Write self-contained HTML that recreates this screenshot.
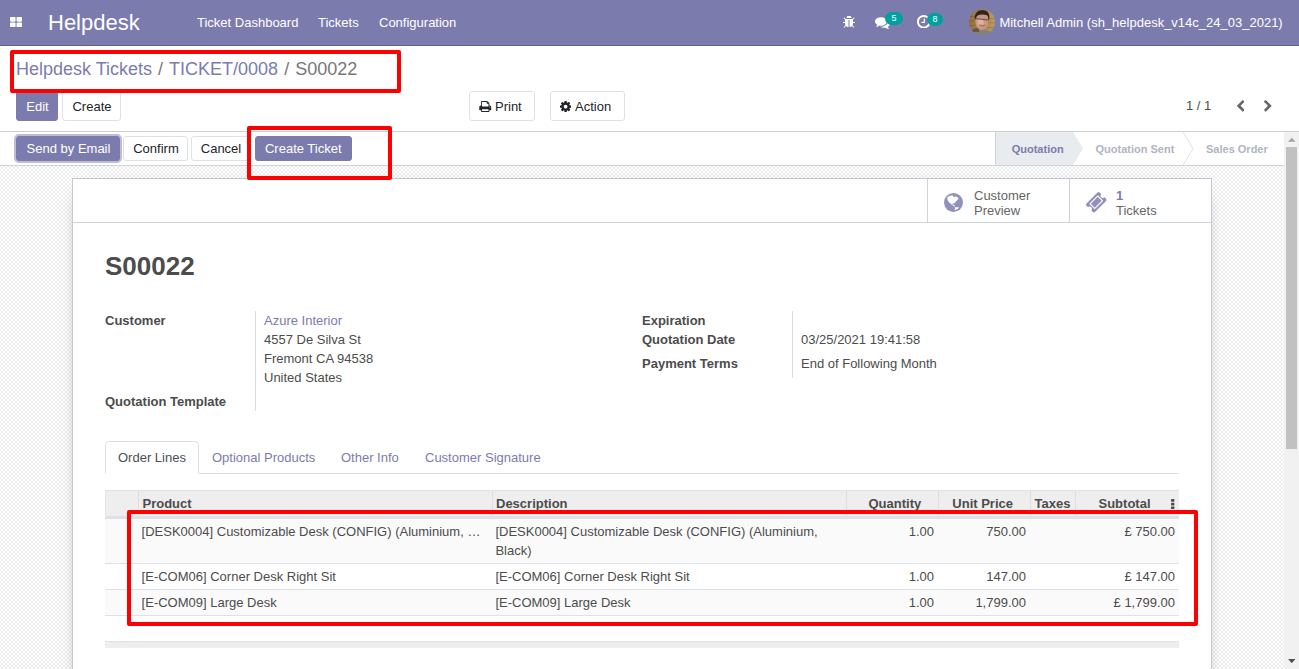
<!DOCTYPE html>
<html lang="en">
<head>
<meta charset="utf-8">
<title>S00022 - Odoo</title>
<style>
*{box-sizing:border-box;margin:0;padding:0}
html,body{width:1299px;height:669px;overflow:hidden;background:#fff}
body{font-family:"Liberation Sans",Arial,sans-serif;font-size:13px;line-height:1.5;color:#4c4c4c;position:relative}
a{text-decoration:none;color:#7c7bad}
.abs{position:absolute}
/* navbar */
#nav{position:absolute;left:0;top:0;width:1299px;height:46px;background:#7c7bad;border-bottom:1px solid #5f5e97;color:#fff}
#nav .t{position:absolute;white-space:nowrap;color:#fff}
#brand{left:48px;top:6px;font-size:22px;line-height:33px}
.menu{font-size:13px;line-height:46px;top:0}
.badge{position:absolute;background:#00a09d;color:#fff;font-size:9px;line-height:13px;height:13px;border-radius:6.5px;text-align:center;font-weight:400}
/* control panel */
#cp{position:absolute;left:0;top:46px;width:1299px;height:86px;background:#fff;border-bottom:1px solid #cfcfcf}
.bc{position:absolute;left:16px;top:11px;font-size:18px;line-height:24px;white-space:nowrap;color:#777}
.bc a{color:#7c7bad}
.bc .sep{color:#777;padding:0 6px}
.btn{position:absolute;height:30px;text-indent:1px;border:1px solid #dee2e6;border-radius:3px;background:#fff;color:#212529;font-size:13px;line-height:29px;text-align:center;white-space:nowrap}
.btn.p{background:#7c7bad;border-color:#7c7bad;color:#fff}
/* statusbar */
#sb{position:absolute;left:0;top:132px;width:1284px;height:34px;background:#fff;border-bottom:1px solid #ced4da}
#sb .btn{height:25px;line-height:23px}
/* content */
#content{position:absolute;left:0;top:166px;width:1284px;height:503px;background-color:#fff;
background-image:conic-gradient(#ececec 25%,#fff 0 50%,#ececec 0 75%,#fff 0);background-size:4px 4px;background-position:3px 1px}
#sheet{position:absolute;left:72px;top:12px;width:1140px;height:520px;background:#fff;border:1px solid #c8c8d3;box-shadow:0 5px 20px -15px #000}
#bbox{position:absolute;left:0;top:0;width:1138px;height:44px;border-bottom:1px solid #ced4da}
.sbtn{position:absolute;top:0;height:43px;width:142px;border-left:1px solid #ced4da}
.sbtn .tx{position:absolute;left:46px;top:9px;font-size:13px;line-height:15px;color:#666}
.lbl{position:absolute;font-weight:bold;color:#4c4c4c;white-space:nowrap;line-height:19px}
.val{position:absolute;white-space:nowrap;line-height:19px;color:#4c4c4c}
/* scrollbar */
#scr{position:absolute;left:1284px;top:132px;width:15px;height:537px;background:#f1f1f1}
#thumb{position:absolute;left:2px;top:15px;width:11px;height:302px;background:#c1c1c1}
/* red boxes */
.red{position:absolute;border:4px solid #f00;border-radius:2px}
.vs{position:absolute;top:1px;width:1px;height:25px;background:#dfdfdf}
.th{position:absolute;top:4px;font-weight:bold;color:#4c4c4c;line-height:19px;white-space:nowrap}
.td{position:absolute;color:#4c4c4c;line-height:19px;white-space:nowrap}
.td.r{text-align:right}
</style>
</head>
<body>
<div id="nav">
  <svg class="abs" style="left:10.100px;top:16.800px" width="12.100" height="10.200" viewBox="64 128 1664 1408"><path fill="#fff" d="M832 1024v384q0 52-38 90t-90 38h-512q-52 0-90-38t-38-90v-384q0-52 38-90t90-38h512q52 0 90 38t38 90zm0-768v384q0 52-38 90t-90 38h-512q-52 0-90-38t-38-90v-384q0-52 38-90t90-38h512q52 0 90 38t38 90zm896 768v384q0 52-38 90t-90 38h-512q-52 0-90-38t-38-90v-384q0-52 38-90t90-38h512q52 0 90 38t38 90zm0-768v384q0 52-38 90t-90 38h-512q-52 0-90-38t-38-90v-384q0-52 38-90t90-38h512q52 0 90 38t38 90z"/></svg>
  <span class="t" id="brand">Helpdesk</span>
  <span class="t menu" style="left:197px">Ticket Dashboard</span>
  <span class="t menu" style="left:318px">Tickets</span>
  <span class="t menu" style="left:379px">Configuration</span>

  <svg class="abs" style="left:843px;top:16px" width="12" height="12" viewBox="128 128 1536 1536"><path fill="#fff" d="M1696 960q0 26-19 45t-45 19h-224q0 171-67 290l208 209q19 19 19 45t-19 45q-18 19-45 19t-45-19l-198-197q-5 5-15 13t-42 28.500-65 36.500-82 29-97 13v-896h-128v896q-51 0-101.500-13.500t-87-33-66-39-43.500-32.500l-15-14-183 207q-20 21-48 21-24 0-43-16-19-18-20.500-44.500t15.500-46.500l202-227q-58-114-58-274h-224q-26 0-45-19t-19-45 19-45 45-19h224v-294l-173-173q-19-19-19-45t19-45 45-19 45 19l173 173h844l173-173q19-19 45-19t45 19 19 45-19 45l-173 173v294h224q26 0 45 19t19 45zm-480-576h-640q0-133 93.500-226.500t226.500-93.500 226.500 93.500 93.500 226.500z"/></svg>
  <svg class="abs" style="left:874.5px;top:15.5px" width="15" height="13" viewBox="0 128 1792 1536"><path fill="#fff" d="M1408 768q0 139-94 257t-256.500 186.500-353.500 68.500q-86 0-176-16-124 88-278 128-36 9-86 16h-3q-11 0-20.500-8t-11.500-21q-1-3-1-6.500t.5-6.500 2-6l2.500-5 3.500-5.500 4-5 4.500-5 4-4.500q5-6 23-25t26-29.500 22.500-29 25-38.500 20.500-44q-124-72-195-177t-71-224q0-139 94-257t256.500-186.500 353.500-68.500 353.500 68.500 256.500 186.500 94 257zm384 256q0 120-71 224.500t-195 176.500q10 24 20.500 44t25 38.500 22.500 29 26 29.500 23 25q1 1 4 4.500t4.500 5 4 5 3.500 5.500l2.500 5 2 6 .5 6.500-1 6.500q-3 14-13 22t-22 7q-50-7-86-16-154-40-278-128-90 16-176 16-271 0-472-132 58 4 88 4 161 0 309-45t264-129q125-92 192-212t67-254q0-77-23-152 129 71 204 178t75 230z"/></svg>
  <span class="badge" style="left:885px;top:12px;width:18px">5</span>
  <svg class="abs" style="left:917px;top:14.5px" width="13.5" height="13.5" viewBox="128 128 1536 1536"><path fill="#fff" d="M1024 544v448q0 14-9 23t-23 9h-320q-14 0-23-9t-9-23v-64q0-14 9-23t23-9h224v-352q0-14 9-23t23-9h64q14 0 23 9t9 23zm416 352q0-148-73-273t-198-198-273-73-273 73-198 198-73 273 73 273 198 198 273 73 273-73 198-198 73-273zm224 0q0 209-103 385.500t-279.500 279.500-385.500 103-385.500-103-279.500-279.500-103-385.500 103-385.500 279.500-279.500 385.500-103 385.500 103 279.500 279.500 103 385.500z"/></svg>
  <span class="badge" style="left:927px;top:13px;width:16px">8</span>
  <svg class="abs" style="left:969px;top:9px" width="26" height="26" viewBox="0 0 26 26"><defs><clipPath id="avc"><circle cx="13" cy="13" r="13"/></clipPath><filter id="avb" x="-10%" y="-10%" width="120%" height="120%"><feGaussianBlur stdDeviation=".55"/></filter><linearGradient id="avg" x1="0" y1="0" x2="1" y2="0"><stop offset="0" stop-color="#94703f"/><stop offset=".55" stop-color="#a88452"/><stop offset="1" stop-color="#bb9a62"/></linearGradient></defs><g clip-path="url(#avc)"><rect width="26" height="26" fill="url(#avg)"/><g filter="url(#avb)"><rect x="-1" y="7" width="8" height=".7" fill="#7d5c33"/><rect x="-1" y="11.500" width="7" height=".7" fill="#7d5c33"/><rect x="-1" y="16" width="7" height=".7" fill="#7d5c33"/><rect x="19" y="9" width="8" height=".7" fill="#98784a"/><rect x="19" y="13.500" width="8" height=".7" fill="#98784a"/><rect x="18" y="18" width="9" height=".7" fill="#98784a"/><path d="M-1 27 L2 21 Q6 18.500 10 20 L17 21.500 Q23 22 25 27 Z" fill="#7f827b"/><path d="M2 22 Q6 18 10 19.500 L10 23 Q5 22 2 25 Z" fill="#6a5442"/><path d="M6.300 9 Q6 16 9 19.500 Q12.500 22.500 16 20 Q19.500 17 19.300 10 Q19 4.500 13 4.500 Q7 4.500 6.300 9 Z" fill="#c9977f"/><ellipse cx="11.500" cy="13.500" rx="3.200" ry="3.800" fill="#dcb29c"/><path d="M5.800 10.500 Q5 1.500 13 1 Q20.500 1 20.300 8 L20 12.500 Q19 8 18.500 6.500 Q14 5 9.500 6 Q7 7 6.500 10.500 Z" fill="#33261f"/><path d="M6.300 9 L19.200 10.500 L19.100 11.500 L6.200 10 Z" fill="#4a4240" opacity=".85"/><path d="M10 15.800 Q13 18.300 16.300 16.200 Q13 17 10 15.800 Z" fill="#a9655a" stroke="#a9655a" stroke-width=".6"/></g></g></svg>
  <span class="t menu" style="left:999.400px">Mitchell Admin (sh_helpdesk_v14c_24_03_2021)</span>
</div>

<div id="cp">
  <div class="bc"><a>Helpdesk Tickets</a><span class="sep">/</span><a>TICKET/0008</a><span class="sep">/</span><span>S00022</span></div>
  <div class="btn p" style="left:16px;top:45px;width:42px">Edit</div>
  <div class="btn" style="left:62px;top:45px;width:59px">Create</div>
  <div class="btn" style="left:469px;top:45px;width:66px"></div><svg class="abs" style="left:479.300px;top:55px" width="12.500" height="11" viewBox="64 128 1664 1536"><path fill="#212529" d="M448 1536h896v-256h-896v256zm0-640h896v-384h-160q-40 0-68-28t-28-68v-160h-640v640zm1152 64q0-26-19-45t-45-19-45 19-19 45 19 45 45 19 45-19 19-45zm128 0v416q0 13-9.500 22.500t-22.500 9.500h-224v160q0 40-28 68t-68 28h-960q-40 0-68-28t-28-68v-160h-224q-13 0-22.500-9.500t-9.500-22.500v-416q0-79 56.500-135.500t135.500-56.500h64v-544q0-40 28-68t68-28h672q40 0 88 20t76 48l152 152q28 28 48 76t20 88v256h64q79 0 135.500 56.500t56.500 135.500z"/></svg><span class="abs" style="left:495px;top:51px;color:#212529;line-height:20px">Print</span>
  <div class="btn" style="left:550px;top:45px;width:75px"></div><svg class="abs" style="left:560.200px;top:54.800px" width="11.200" height="11.200" viewBox="128 128 1536 1536"><path fill="#212529" d="M1152 896q0-106-75-181t-181-75-181 75-75 181 75 181 181 75 181-75 75-181zm512-109v222q0 12-8 23t-20 13l-185 28q-19 54-39 91 35 50 107 138 10 12 10 25t-9 23q-27 37-99 108t-94 71q-12 0-26-9l-138-108q-44 23-91 38-16 136-29 186-7 28-36 28h-222q-14 0-24.500-8.500t-11.500-21.500l-28-184q-49-16-90-37l-141 107q-10 9-25 9-14 0-25-11-126-114-165-168-7-10-7-23 0-12 8-23 15-21 51-66.500t54-70.500q-27-50-41-99l-183-27q-13-2-21-12.500t-8-23.500v-222q0-12 8-23t19-13l186-28q14-46 39-92-40-57-107-138-10-12-10-24 0-10 9-23 26-36 98.500-107.500t94.500-71.500q13 0 26 10l138 107q44-23 91-38 16-136 29-186 7-28 36-28h222q14 0 24.500 8.500t11.500 21.500l28 184q49 16 90 37l142-107q9-9 24-9 13 0 25 10 129 119 165 170 7 8 7 22 0 12-8 23-15 21-51 66.500t-54 70.500q26 50 41 98l183 28q13 2 21 12.500t8 23.500z"/></svg><span class="abs" style="left:575px;top:51px;color:#212529;line-height:20px">Action</span>
  <div class="val" style="left:1186px;top:50px;color:#4c4c4c">1 / 1</div>
  <svg class="abs" style="left:1236.600px;top:54.100px" width="7.500" height="11.700" viewBox="410 26 1036 1612"><path fill="#666" d="M1427 301l-531 531 531 531q19 19 19 45t-19 45l-166 166q-19 19-45 19t-45-19l-742-742q-19-19-19-45t19-45l742-742q19-19 45-19t45 19l166 166q19 19 19 45t-19 45z"/></svg>
  <svg class="abs" style="left:1264.300px;top:54.100px" width="7.500" height="11.700" viewBox="346 26 1036 1612"><path fill="#666" d="M1363 877l-742 742q-19 19-45 19t-45-19l-166-166q-19-19-19-45t19-45l531-531-531-531q-19-19-19-45t19-45l166-166q19-19 45-19t45 19l742 742q19 19 19 45t-19 45z"/></svg>
</div>

<div id="sb">
  <div class="btn p" style="left:16px;top:4px;width:104px;box-shadow:0 0 0 2px rgba(124,123,173,.5)">Send by Email</div>
  <div class="btn" style="left:123px;top:4px;width:65px">Confirm</div>
  <div class="btn" style="left:191px;top:4px;width:59px">Cancel</div>
  <div class="btn p" style="left:255px;top:4px;width:97px;text-indent:-.5px">Create Ticket</div>

  <svg class="abs" style="left:995px;top:0" width="289" height="33" viewBox="0 0 289 33">
    <path d="M0.500 0 H78 L88 16.500 L78 33 H0.500 Z" fill="#e9ecef"/>
    <path d="M0.500 0 V33" stroke="#ced4da" stroke-width="1" fill="none"/>
    <path d="M188 0 L198 16.500 L188 33" stroke="#dee2e6" stroke-width="1" fill="none"/>
    <text x="16.700" y="21" font-family="Liberation Sans, Arial, sans-serif" font-size="11" font-weight="bold" fill="#7c7bad">Quotation</text>
    <text x="100.500" y="21" font-family="Liberation Sans, Arial, sans-serif" font-size="11" font-weight="bold" fill="#b0b4c6">Quotation Sent</text>
    <text x="211" y="21" font-family="Liberation Sans, Arial, sans-serif" font-size="11" font-weight="bold" fill="#b0b4c6">Sales Order</text>
  </svg>
</div>

<div id="content">
  <div id="sheet">
    <div id="bbox">
      <div class="sbtn" style="left:854px"><svg class="abs" style="left:16px;top:13.800px" width="19" height="19" viewBox="0 0 19 19"><circle cx="9.500" cy="9.500" r="9.500" fill="#9291be"/><path fill="#fff" d="M3.200 4.600 L4.700 3.200 L7.100 2.600 L8.500 2.300 L9.200 3.600 L10.600 4.200 L11.100 3.200 L13.100 4 L14.600 5.200 L13.800 6.700 L12.300 8.100 L11.100 9.500 L10.100 10.400 L8.500 10.500 L8.300 11.600 L9.800 12 L10.800 12.800 L11.100 13.600 L9.900 13.300 L8.500 12.200 L7.100 10.900 L5.400 9.400 L4 7.900 L3.400 6.400 Z M10.800 14.300 L15 14.300 L14.100 15.800 L11.100 17.300 Z"/></svg><div class="tx">Customer<br>Preview</div></div>
      <div class="sbtn" style="left:996px"><svg class="abs" style="left:16px;top:13px" width="20.500" height="20.500" viewBox="52 52 1688 1688"><path fill="#9291be" d="M1024 452l316 316-572 572-316-316zm-211 979l618-618q19-19 19-45t-19-45l-362-362q-18-18-45-18t-45 18l-618 618q-19 19-19 45t19 45l362 362q18 18 45 18t45-18zm889-637l-907 908q-37 37-90.500 37t-90.500-37l-126-126q56-56 56-136t-56-136-136-56-136 56l-125-126q-37-37-37-90.500t37-90.500l907-906q37-37 90.500-37t90.500 37l125 125q-56 56-56 136t56 136 136 56 136-56l126 125q37 37 37 90.500t-37 90.500z"/></svg><div class="tx"><span style="color:#7c7bad;font-weight:bold">1</span><br>Tickets</div></div>
    </div>
    <div class="abs" style="left:32px;top:68px;font-size:26px;font-weight:bold;line-height:38px;color:#4c4c4c">S00022</div>
    <div class="lbl" style="left:32px;top:132px">Customer</div>
    <div class="lbl" style="left:32px;top:213px">Quotation Template</div>
    <div class="val" style="left:191px;top:132px"><a>Azure Interior</a><br>4557 De Silva St<br>Fremont CA 94538<br>United States</div>
    <div class="lbl" style="left:569px;top:132px">Expiration</div>
    <div class="lbl" style="left:569px;top:151px">Quotation Date</div>
    <div class="lbl" style="left:569px;top:175px">Payment Terms</div>
    <div class="val" style="left:728px;top:151px">03/25/2021 19:41:58</div>
    <div class="val" style="left:728px;top:175px">End of Following Month</div>

    <div class="abs" style="left:182px;top:132px;width:1px;height:100px;background:#ddd"></div>
    <div class="abs" style="left:719px;top:132px;width:1px;height:67px;background:#ddd"></div>
    <!-- tabs -->
    <div class="abs" style="left:32px;top:294px;width:1074px;height:1px;background:#dee2e6"></div>
    <div class="abs" style="left:32px;top:262px;width:94px;height:33px;border:1px solid #dee2e6;border-bottom-color:#fff;border-radius:4px 4px 0 0;background:#fff"></div>
    <div class="val" style="left:45px;top:269px;line-height:20px;color:#495057">Order Lines</div>
    <div class="val" style="left:139px;top:269px;line-height:20px;color:#7c7bad">Optional Products</div>
    <div class="val" style="left:268px;top:269px;line-height:20px;color:#7c7bad">Other Info</div>
    <div class="val" style="left:352px;top:269px;line-height:20px;color:#7c7bad">Customer Signature</div>
    <!-- table -->
    <div id="tbl" class="abs" style="left:32px;top:311px;width:1074px;height:160px">
      <div class="abs" style="left:0;top:0;width:1074px;height:29px;background:#eee;border-top:1px solid #dee2e6;border-bottom:3px solid #dee2e6;border-left:1px solid #e2e5e8"></div>
      <div class="vs" style="left:33px"></div><div class="vs" style="left:387px"></div><div class="vs" style="left:741px"></div><div class="vs" style="left:833px"></div><div class="vs" style="left:925px"></div><div class="vs" style="left:970px"></div>
      <div class="th" style="left:37.500px">Product</div>
      <div class="th" style="left:391px">Description</div>
      <div class="th" style="left:763.500px">Quantity</div>
      <div class="th" style="left:847.300px">Unit Price</div>
      <div class="th" style="left:929.500px">Taxes</div>
      <div class="th" style="left:993.500px">Subtotal</div>
      <svg class="abs" style="left:1066.200px;top:8.700px" width="3.400" height="10.200" preserveAspectRatio="none" viewBox="704 128 384 1408"><path fill="#4c4c4c" d="M1088 1248v192q0 40-28 68t-68 28h-192q-40 0-68-28t-28-68v-192q0-40 28-68t68-28h192q40 0 68 28t28 68zm0-512v192q0 40-28 68t-68 28h-192q-40 0-68-28t-28-68v-192q0-40 28-68t68-28h192q40 0 68 28t28 68zm0-512v192q0 40-28 68t-68 28h-192q-40 0-68-28t-28-68v-192q0-40 28-68t68-28h192q40 0 68 28t28 68z"/></svg>
      <div class="abs" style="left:0;top:29px;width:1074px;height:44px;background:#fafafa"></div>
      <div class="abs" style="left:0;top:73px;width:1074px;height:1px;background:#dee2e6"></div>
      <div class="abs" style="left:0;top:99px;width:1074px;height:1px;background:#dee2e6"></div>
      <div class="abs" style="left:0;top:100px;width:1074px;height:25px;background:#fafafa"></div>
      <div class="abs" style="left:0;top:125px;width:1074px;height:1px;background:#dee2e6"></div>
      <div class="abs" style="left:0;top:151px;width:1074px;height:7px;background:#eee;border-top:1px solid #dee2e6"></div>
      <div class="td" style="left:36.600px;top:32px">[DESK0004] Customizable Desk (CONFIG) (Aluminium, …</div>
      <div class="td" style="left:390.400px;top:32px">[DESK0004] Customizable Desk (CONFIG) (Aluminium,<br>Black)</div>
      <div class="td r" style="right:245px;top:32px">1.00</div>
      <div class="td r" style="right:153px;top:32px">750.00</div>
      <div class="td r" style="right:4px;top:32px">£ 750.00</div>
      <div class="td" style="left:36.600px;top:77px">[E-COM06] Corner Desk Right Sit</div>
      <div class="td" style="left:390.400px;top:77px">[E-COM06] Corner Desk Right Sit</div>
      <div class="td r" style="right:245px;top:77px">1.00</div>
      <div class="td r" style="right:153px;top:77px">147.00</div>
      <div class="td r" style="right:4px;top:77px">£ 147.00</div>
      <div class="td" style="left:36.600px;top:103px">[E-COM09] Large Desk</div>
      <div class="td" style="left:390.400px;top:103px">[E-COM09] Large Desk</div>
      <div class="td r" style="right:245px;top:103px">1.00</div>
      <div class="td r" style="right:153px;top:103px">1,799.00</div>
      <div class="td r" style="right:4px;top:103px">£ 1,799.00</div>
    </div>
  </div>
</div>

<div id="scr"><div id="thumb"></div><svg class="abs" style="left:4px;top:4.700px" width="7.500" height="5" viewBox="0 0 8 5"><path d="M0 5 L4 0.500 L8 5 Z" fill="#a3a3a3"/></svg><svg class="abs" style="left:3.800px;top:526.800px" width="7.500" height="4.500" viewBox="0 0 8 5"><path d="M0 0 L8 0 L4 4.700 Z" fill="#505050"/></svg></div>

<div class="red" style="left:10px;top:50px;width:391px;height:43px"></div>
<div class="red" style="left:247px;top:126px;width:145px;height:54px"></div>
<div class="red" style="left:127px;top:510px;width:1071px;height:116px"></div>
</body>
</html>
